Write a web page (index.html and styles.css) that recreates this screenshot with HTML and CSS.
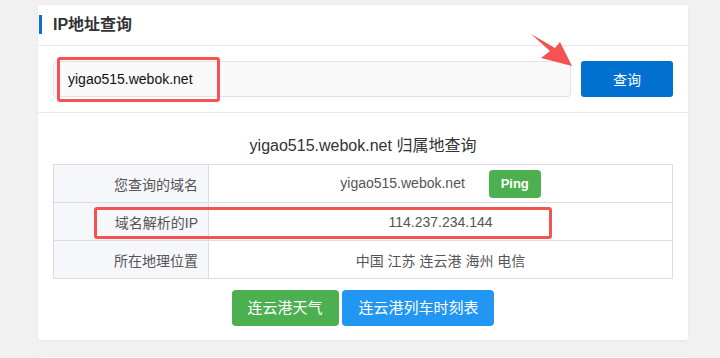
FILE: index.html
```html
<!DOCTYPE html>
<html lang="zh-CN">
<head>
    <meta charset="UTF-8">
    <meta name="viewport" content="width=device-width, initial-scale=1.0">
    <title>IP地址查询</title>
    <link rel="stylesheet" href="styles.css">
</head>
<body>
    <div class="card">
        <div class="card-header">
            <h2>IP地址查询</h2>
        </div>

        <form class="search" onsubmit="return false">
            <input type="text" class="search-input" value="yigao515.webok.net">
            <button type="submit" class="search-btn">查询</button>
        </form>

        <div class="result">
            <h3>yigao515.webok.net 归属地查询</h3>
            <table class="info-table">
                <tr>
                    <th>您查询的域名</th>
                    <td>yigao515.webok.net <span class="ping">Ping</span></td>
                </tr>
                <tr>
                    <th>域名解析的IP</th>
                    <td>114.237.234.144</td>
                </tr>
                <tr>
                    <th>所在地理位置</th>
                    <td>中国 江苏 连云港 海州 电信</td>
                </tr>
            </table>
            <div class="links">
                <a href="#" class="btn btn-green">连云港天气</a>
                <a href="#" class="btn btn-blue">连云港列车时刻表</a>
            </div>
        </div>

        <!-- 标注 -->
        <div class="mark mark-input"></div>
        <div class="mark mark-ip"></div>
        <svg class="arrow" width="50" height="40" viewBox="0 0 50 40">
            <polygon points="1,1 20,18 11,25 42,33 30,9 25,15" fill="#f55252"/>
        </svg>
    </div>

    <div class="card card-next"></div>
</body>
</html>
```

FILE: styles.css
```css
* {
    box-sizing: border-box;
    margin: 0;
    padding: 0;
}

body {
    background-color: #f1f1f1;
    color: #333;
    font-family: "Liberation Sans", "Noto Sans CJK SC", sans-serif;
    font-size: 14px;
    padding: 5px 0 0 38px;
}

.card {
    position: relative;
    width: 650px;
    background: #fff;
    border-radius: 3px;
    box-shadow: 0 1px 3px rgba(0, 0, 0, 0.05);
}

.card-next {
    height: 40px;
    margin-top: 17px;
}

.card-header {
    height: 41px;
    padding-top: 10px;
    border-bottom: 1px solid #e8e8e8;
}

.card-header h2 {
    font-size: 16px;
    font-weight: bold;
    line-height: 19px;
    color: #333;
    border-left: 3px solid #0a6fd0;
    margin-left: 1px;
    padding-left: 11px;
}

.search {
    display: flex;
    gap: 10px;
    padding: 15px;
    border-bottom: 1px solid #e8e8e8;
}

.search-input {
    flex: 1;
    height: 36px;
    padding: 0 14px;
    background: #f9f9f9;
    border: 1px solid #e3e3e3;
    border-radius: 3px;
    font-family: inherit;
    font-size: 14px;
    color: #111;
    outline: none;
}

.search-btn {
    width: 92px;
    height: 36px;
    background: #0170cf;
    color: #fff;
    border: none;
    border-radius: 3px;
    font-family: inherit;
    font-size: 14px;
    cursor: pointer;
}

.result {
    padding: 20px 15px 14px;
    text-align: center;
}

.result h3 {
    font-size: 16px;
    font-weight: normal;
    line-height: 26px;
    color: #333;
    margin-bottom: 5px;
}

.info-table {
    width: 100%;
    border-collapse: collapse;
    border: 1px solid #ddd;
}

.info-table th,
.info-table td {
    height: 38px;
    border: 1px solid #ddd;
    font-weight: normal;
    color: #555;
    vertical-align: middle;
}

.info-table th {
    width: 155px;
    background: #f5f7fa;
    text-align: right;
    padding-right: 10px;
}

.info-table td {
    text-align: center;
}

.ping {
    display: inline-block;
    margin-left: 20px;
    width: 52px;
    line-height: 28px;
    background: #4caf50;
    color: #fff;
    font-weight: bold;
    font-size: 13px;
    border-radius: 4px;
}

.links {
    margin-top: 11px;
}

.btn {
    display: inline-block;
    height: 36px;
    line-height: 36px;
    padding: 0 16px;
    font-size: 15px;
    color: #fff;
    text-decoration: none;
    border-radius: 4px;
}

.btn-green {
    background: #4caf50;
}

.btn-blue {
    background: #2196f3;
}

.mark {
    position: absolute;
    border: 3px solid #f55252;
    border-radius: 3px;
}

.mark-input {
    left: 19px;
    top: 52px;
    width: 163px;
    height: 45px;
}

.mark-ip {
    left: 56px;
    top: 202px;
    width: 458px;
    height: 32px;
}

.arrow {
    position: absolute;
    left: 492px;
    top: 28px;
}
```
